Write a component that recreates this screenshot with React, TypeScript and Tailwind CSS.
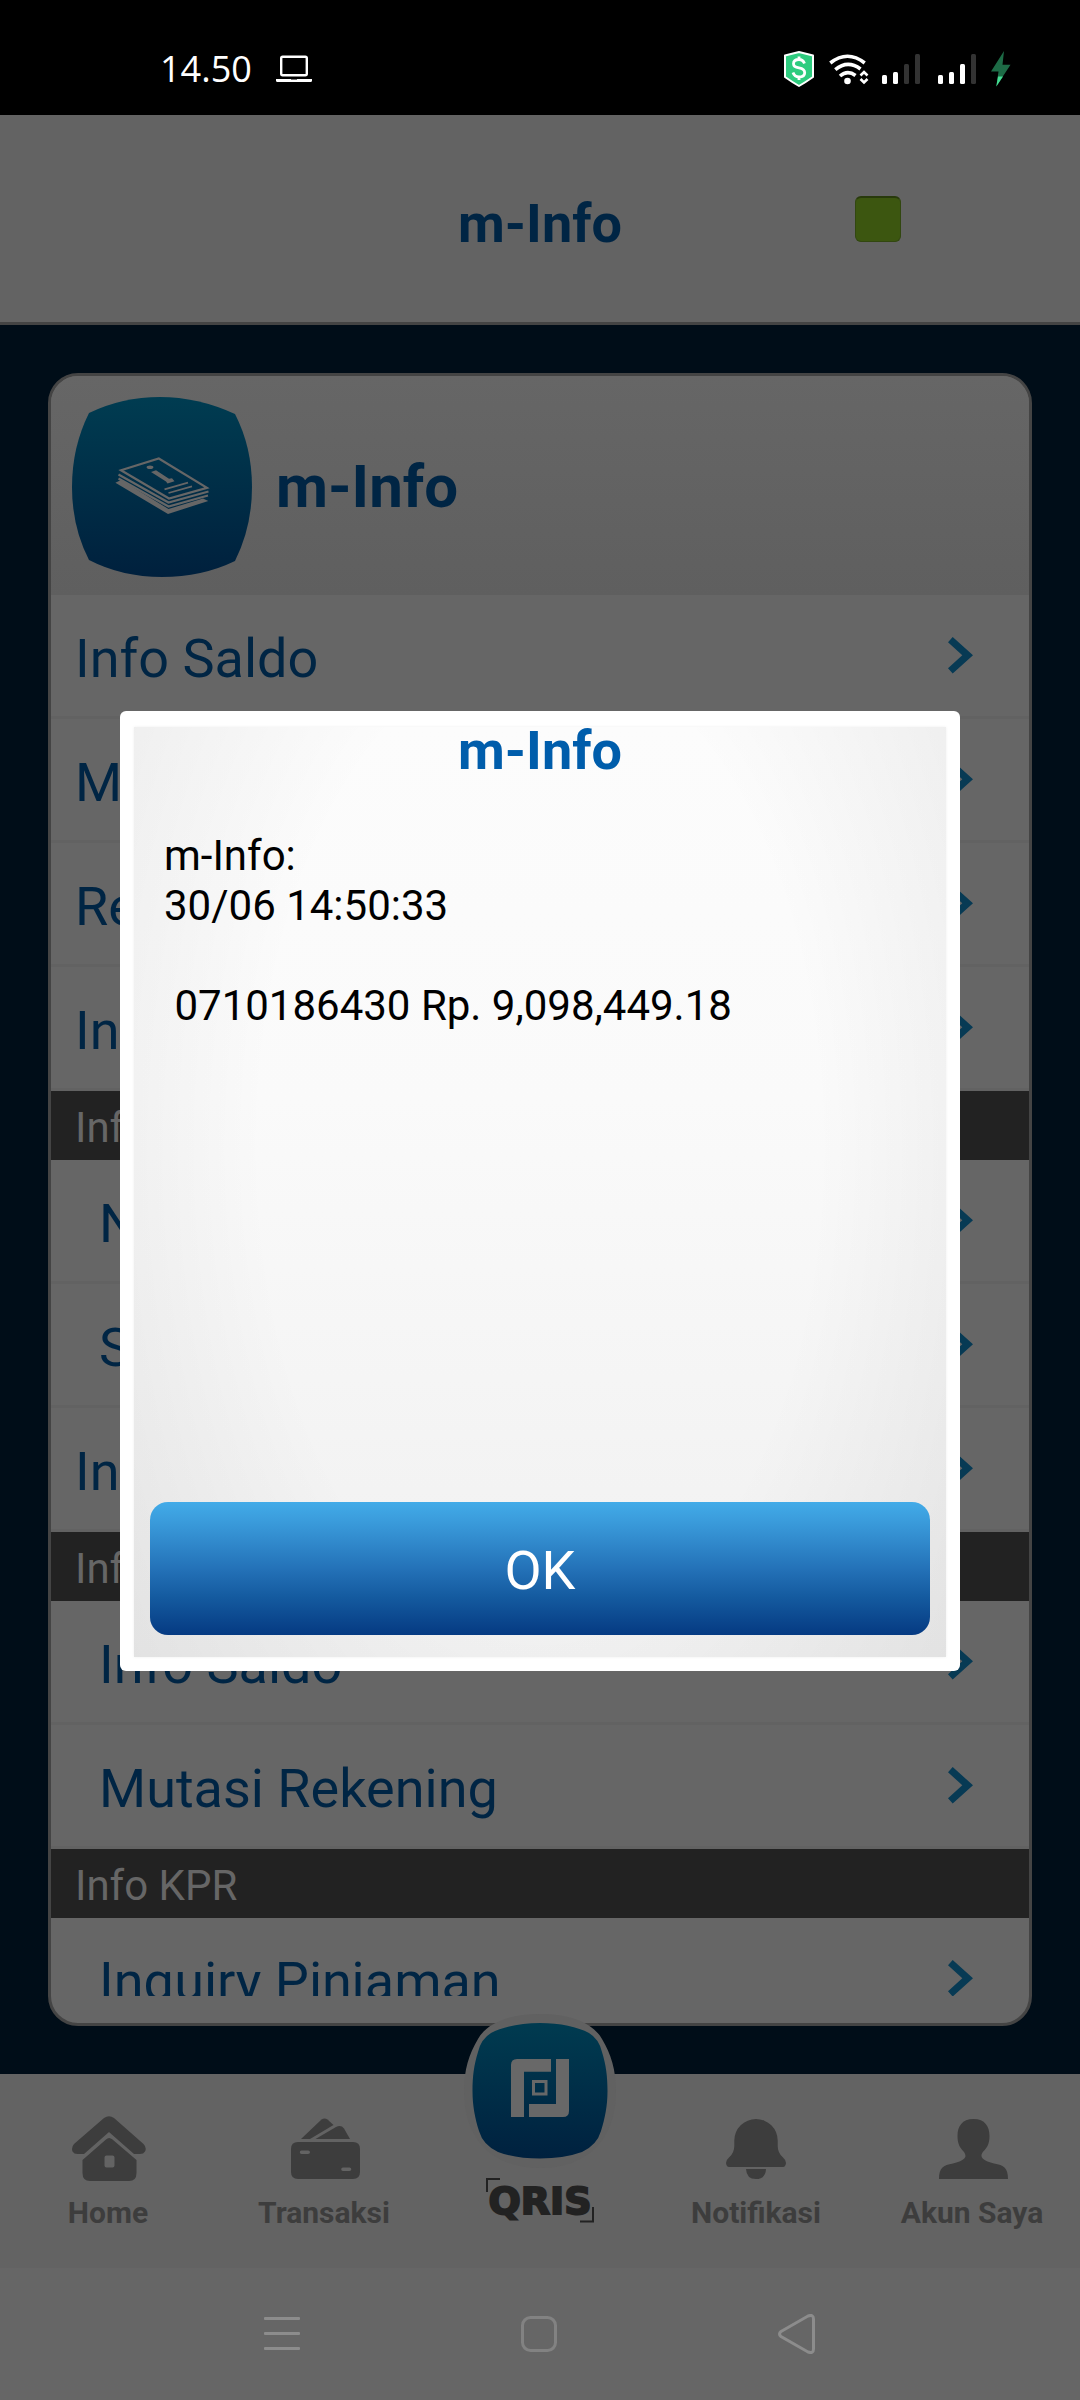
import React from "react";

type Row =
  | { kind: "item"; label: string; indent?: boolean }
  | { kind: "section"; label: string };

const rows: Row[] = [
  { kind: "item", label: "Info Saldo" },
  { kind: "item", label: "Mutasi Rekening" },
  { kind: "item", label: "Rekening Deposito" },
  { kind: "item", label: "Info Reward" },
  { kind: "section", label: "Info Reksadana" },
  { kind: "item", label: "NAB", indent: true },
  { kind: "item", label: "Saldo", indent: true },
  { kind: "item", label: "Info Kurs" },
  { kind: "section", label: "Info RDN" },
  { kind: "item", label: "Info Saldo", indent: true },
  { kind: "item", label: "Mutasi Rekening", indent: true },
  { kind: "section", label: "Info KPR" },
  { kind: "item", label: "Inquiry Pinjaman", indent: true },
];

function Signal({ level }: { level: number }) {
  const tops = [21, 18, 10, 0];
  return (
    <svg width="38" height="30" viewBox="0 0 38 30" aria-hidden="true">
      {tops.map((top, i) => (
        <rect
          key={top}
          x={i * 11}
          y={top}
          width="5"
          height={30 - top}
          rx="1.5"
          fill={i < level ? "#ffffff" : "#333333"}
        />
      ))}
    </svg>
  );
}

function StatusBar() {
  return (
    <div className="flex h-[115px] shrink-0 items-center justify-between bg-black pl-40 pr-[69px] pt-[23px] text-white">
      <div className="flex items-center gap-6">
        <span className="font-['Open_Sans',sans-serif] text-[36px] leading-none">14.50</span>
        <svg width="36" height="28" viewBox="0 0 36 28" fill="none" aria-hidden="true">
          <rect x="5.2" y="1.7" width="25.6" height="18.6" rx="1.5" stroke="#fff" strokeWidth="2.4" />
          <path d="M0 24h36v1.500q0 1.500-1.500 1.500h-33q-1.500 0-1.500-1.500z" fill="#fff" />
          <path d="M15 24h6v1h-6z" fill="#777" />
        </svg>
      </div>
      <div className="flex items-center">
        <svg className="mr-[15px]" width="30" height="36" viewBox="0 0 30 36" fill="none" aria-hidden="true">
          <path d="M15 1 29 4.500V26Q22 31 15 35Q8 31 1 26V4.500Z" fill="#2ecc7f" stroke="#fff" strokeWidth="2" strokeLinejoin="round" />
          <path d="M20.500 12.500Q19 8.500 15 8.500Q9.500 8.500 9.500 12.700Q9.500 16 15 16.800Q20.700 17.800 20.700 21.800Q20.700 26 15 26Q10.500 26 9 21.500M15 5.500v3M15 26v3" stroke="#fff" strokeWidth="2.800" />
        </svg>
        <svg className="mr-[13px]" width="40" height="31" viewBox="0 0 40 31" fill="none" aria-hidden="true">
          <g stroke="#fff" strokeWidth="3.600">
            <path d="M1.300 9Q18.500-4.500 35.700 9" />
            <path d="M6.300 15.700Q18.500 5.500 31.500 15" />
            <path d="M11 22Q18.500 15.500 26.500 21.500" />
          </g>
          <circle cx="18.500" cy="27" r="3.300" fill="#fff" />
          <path d="M31.500 21.500 35 18 38.500 21.500M31.500 25 35 28.500 38.500 25" stroke="#fff" strokeWidth="2.600" />
        </svg>
        <div className="flex items-center gap-[18px]">
          <Signal level={2} />
          <Signal level={3} />
        </div>
        <svg className="ml-[15px]" width="20" height="36" viewBox="0 0 20 36" aria-hidden="true">
          <path d="M13 0 0 20.500H7.500L5.300 35.500 19.500 13.800H11.500Z" fill="#1d6b46" />
          <path d="M7 25.500H12L5.300 35.500Z" fill="#43dd92" />
        </svg>
      </div>
    </div>
  );
}

function InfoBadge() {
  return (
    <svg width="180" height="180" viewBox="0 0 180 180" fill="none" aria-hidden="true">
      <defs>
        <linearGradient id="badge" x1="0" y1="0" x2="0" y2="1">
          <stop offset="0" stopColor="#003c51" />
          <stop offset="1" stopColor="#00203d" />
        </linearGradient>
      </defs>
      <path d="M17 16Q50 0 88 0T163 17Q180 50 180 90T163 164Q130 180 90 180T17 163Q0 130 0 90T17 16Z" fill="url(#badge)" />
      <g stroke="#666" strokeWidth="2.200">
        <path d="M49 73.300 86.800 61.500 135 90.800 97 101.500Z" />
        <path d="M46.500 77.500 96.500 105.500 136.500 94.500" />
        <path d="M46.500 81.500 96.500 109.500 136 98.500" />
        <path d="M92.500 92.300 116 85.700M96.500 96 120 89.300" strokeWidth="1.800" />
      </g>
      <path d="M43.400 85.700 49 83 96.500 112 131 101.500 136.300 104 96 117Z" fill="#666" />
      <ellipse cx="78" cy="70.300" rx="3.400" ry="1.800" fill="#666" />
      <path d="M79 75 84 73.300 97 81.800 100 81.300 102.500 84.300 95.500 86.500 94 84.500Z" fill="#666" />
    </svg>
  );
}

function Chevron() {
  return (
    <svg className="shrink-0" width="25" height="37" viewBox="0 0 25 37" aria-hidden="true">
      <path d="M4.700 0 25 18.300 4.700 36.500 0 31.300 14.300 18.300 0 5.200Z" fill="#073a54" />
    </svg>
  );
}

function MenuCard() {
  return (
    <section className="flex min-h-0 flex-1 flex-col overflow-hidden rounded-[30px] border-[3px] border-[#444] bg-[#666] pb-[27px]">
      <div className="flex h-[219px] shrink-0 items-center gap-6 bg-linear-to-b from-[#666] to-[#5f5f5f] pl-[21px] pt-[3px]">
        <InfoBadge />
        <h2 className="text-[60px] font-bold leading-none text-[#002544]">m-Info</h2>
      </div>
      <ul className="min-h-0 flex-1 overflow-y-auto [scrollbar-width:none]">
        {rows.map((row, i) =>
          row.kind === "section" ? (
            <li key={i} className="flex h-[69px] items-center bg-[#222] pl-6 pt-[5px] text-[42px] leading-none text-[#666]">
              {row.label}
            </li>
          ) : (
            <li key={i}>
              <a
                href="#"
                className={`flex h-[124px] items-center justify-between border-b-[3px] border-[#626262] pr-14 text-[54px] leading-none text-[#002544] ${
                  row.indent ? "pl-12" : "pl-6"
                }`}
              >
                <span className="pt-1.5">{row.label}</span>
                <Chevron />
              </a>
            </li>
          ),
        )}
      </ul>
    </section>
  );
}

function HomeIcon() {
  return (
    <svg width="76" height="65" viewBox="-2 0 76 65" fill="#3d3d3d" aria-hidden="true">
      <path d="M32 2Q37 -1.500 42 2L71.500 28Q75 31.500 73 35.500Q71.500 38 68 38H62L37 16 12 38H5.500Q2 38 .5 35.500Q-1 31.500 2 28Z" />
      <path fillRule="evenodd" d="M34 23.500Q37 20.500 40.500 23.500L64.500 44V57Q64.500 65 57 65H18Q10.500 65 10.500 57V44ZM34.500 39.500Q32.500 39.500 32.500 41.500V49.500Q32.500 51.500 34.500 51.500H40.500Q42.500 51.500 42.500 49.500V41.500Q42.500 39.500 40.500 39.500Z" />
    </svg>
  );
}

function CardsIcon() {
  return (
    <svg width="71" height="64" viewBox="-2 0 71 64" fill="#3d3d3d" aria-hidden="true">
      <path d="M10 22 30.500 2.500Q33.500 .5 36.500 2.500L42.500 8 19 22Z" />
      <path d="M24.500 22 45 10Q50 7.500 53 11.500L59 22Z" />
      <path fillRule="evenodd" d="M7 25H62Q69 25 69 32V55Q69 62 62 62H7Q0 62 0 55V32Q0 25 7 25ZM10.500 33.500Q8.800 33.500 8.800 35.200Q8.800 37 10.500 37H17Q19 37 19 35.200Q19 33.500 17 33.500ZM52 50.500Q50.200 50.500 50.200 52.200Q50.200 54 52 54H58.500Q60.300 54 60.300 52.200Q60.300 50.500 58.500 50.500Z" />
    </svg>
  );
}

function BellIcon() {
  return (
    <svg width="60" height="62" viewBox="0 0 60 62" fill="#3d3d3d" aria-hidden="true">
      <path d="M8.300 21.500A21.700 21.500 0 0 1 51.700 21.500V27Q51.700 34 57 38.500Q60 41 60 44Q59.500 48 57 48H3Q.5 48 0 44Q0 41 3 38.500Q8.300 34 8.300 27Z" />
      <path d="M20 50H40Q39.500 60 30 60T20 50Z" />
    </svg>
  );
}

function PersonIcon() {
  return (
    <svg width="71" height="62" viewBox="-2 0 71 62" fill="#3d3d3d" aria-hidden="true">
      <path d="M34.500 0C46 0 50.500 7.500 50.500 17C50.500 31 42.500 31 42.500 37C42.500 40 48 43 55 44.500C65 46 69 49 69 60H0C0 49 4 46 14 44.500C21 43 26.500 40 26.500 37C26.500 31 18.500 31 18.500 17C18.500 7.500 23 0 34.500 0Z" />
    </svg>
  );
}

function QrisButton() {
  return (
    <svg width="154" height="154" viewBox="0 0 154 154" fill="none" aria-hidden="true">
      <defs>
        <linearGradient id="scan" x1="0" y1="0" x2="0" y2="1">
          <stop offset="0" stopColor="#003b50" />
          <stop offset="1" stopColor="#00213f" />
        </linearGradient>
      </defs>
      <path d="M77 0C108 0 130 9 139 25C148 40 153 56 153 77C153 125 125 154 77 154S1 125 1 77C1 56 6 40 15 25C24 9 46 0 77 0Z" fill="#616161" />
      <path d="M77 9C97 9 115 13 126 19Q136 25 139 38C143 51 144.500 62 144.500 77S142 104 138 117Q134 131 119 138Q101 144.500 77 144.500T35 138Q20 131 16 117C12 104 9.500 92 9.500 77S11 51 15 38Q18 25 28 19C39 13 57 9 77 9Z" fill="url(#scan)" />
      <path d="M48 103V51Q48 45 54 45H88V57.700H61V103ZM93 45H106V97Q106 103 100 103H66V90H93Z" fill="#686868" />
      <rect x="70.500" y="67.500" width="12.500" height="12.500" stroke="#686868" strokeWidth="3" />
    </svg>
  );
}

function QrisMark() {
  return (
    <svg width="108" height="45" viewBox="0 0 108 45" role="img" aria-label="QRIS">
      <path d="M1 14V1H14M94 43.500H107V29" fill="none" stroke="#222" strokeWidth="2" />
      <text
        x="54"
        y="36"
        textAnchor="middle"
        fill="#222"
        stroke="#222"
        strokeWidth="2"
        className="font-['DejaVu_Sans',sans-serif] text-[38px] font-bold"
      >
        QRIS
      </text>
    </svg>
  );
}

function Tab({ label, icon }: { label: string; icon: React.ReactNode }) {
  return (
    <a href="#" className="flex flex-1 flex-col items-center text-[#3d3d3d]">
      <span className="flex h-[107px] items-end">{icon}</span>
      <span className="mt-[15px] whitespace-nowrap text-[30px] font-bold leading-[34px]">{label}</span>
    </a>
  );
}

function TabBar() {
  return (
    <nav className="relative flex h-[194px] shrink-0 bg-[#636363]">
      <Tab label="Home" icon={<HomeIcon />} />
      <Tab label="Transaksi" icon={<CardsIcon />} />
      <a href="#" className="flex flex-1 flex-col items-center">
        <span className="absolute bottom-[100px]">
          <QrisButton />
        </span>
        <span className="mt-[104px]">
          <QrisMark />
        </span>
      </a>
      <Tab label="Notifikasi" icon={<BellIcon />} />
      <Tab label="Akun Saya" icon={<PersonIcon />} />
    </nav>
  );
}

function InfoDialog() {
  return (
    <div
      role="dialog"
      aria-labelledby="dialog-title"
      className="flex min-h-[960px] w-full flex-col rounded-md bg-white px-[14px] pb-[14px] pt-4"
    >
      <div className="flex flex-1 flex-col bg-[radial-gradient(ellipse_62%_95%_at_50%_45%,transparent_55%,rgba(0,0,0,0.06)_100%),linear-gradient(#fcfcfc_0%,#fafafa_40%,#f0f0f0_100%)] px-4 pb-[22px] shadow-[0_0_3px_#f0f0f0]">
        <h2 id="dialog-title" className="text-center text-[54px] font-bold leading-[48px] text-[#005dab]">
          m-Info
        </h2>
        <div className="mt-14 flex-1 whitespace-pre-wrap pl-[14px] text-[42px] leading-[50px] text-black">
          {"m-Info:\n30/06 14:50:33\n\n 0710186430 Rp. 9,098,449.18"}
        </div>
        <button
          type="button"
          className="h-[133px] rounded-[18px] bg-[linear-gradient(#42abe8_0%,#3a9bdb_15%,#2472b8_50%,#145a9f_72%,#053a82_100%)] pt-1 text-[54px] leading-none text-white"
        >
          OK
        </button>
      </div>
    </div>
  );
}

function SystemNav() {
  return (
    <div className="flex h-[132px] shrink-0 items-center justify-center gap-[221px] bg-[#666]">
      <button type="button" aria-label="Recent apps">
        <svg width="36" height="34" viewBox="0 0 36 34" fill="#8c8c8c" aria-hidden="true">
          <rect y="0" width="36" height="3" rx="1" />
          <rect y="15" width="36" height="3" rx="1" />
          <rect y="30" width="36" height="3" rx="1" />
        </svg>
      </button>
      <button type="button" aria-label="Home">
        <svg width="36" height="36" viewBox="0 0 36 36" fill="none" aria-hidden="true">
          <rect x="1.500" y="1.500" width="33" height="33" rx="8" stroke="#828282" strokeWidth="3" />
        </svg>
      </button>
      <button type="button" aria-label="Back">
        <svg width="38" height="40" viewBox="0 0 38 40" fill="none" aria-hidden="true">
          <path d="M3 17.500 30 2Q35.500 0 35.500 5V35Q35.500 40 30 38L3 22.500Q0 20 3 17.500Z" stroke="#8c8c8c" strokeWidth="3" />
        </svg>
      </button>
    </div>
  );
}

export default function App() {
  return (
    <div className="flex h-screen flex-col bg-[#000d18] font-[Roboto,sans-serif]">
      <StatusBar />
      <div className="relative flex min-h-0 flex-1 flex-col">
        <header className="relative flex h-[210px] shrink-0 items-center justify-center border-b-[3px] border-[#444] bg-[#636363] pt-2.5">
          <h1 className="text-[54px] font-bold leading-none text-[#002544]">m-Info</h1>
          <span
            role="img"
            aria-label="Online"
            className="absolute right-[179px] top-[81px] size-[46px] rounded-md border border-t-2 border-[#324710] border-t-[#283a0c] bg-[#3c5610]"
          />
        </header>
        <main className="flex min-h-0 flex-1 flex-col p-12">
          <MenuCard />
        </main>
        <TabBar />
        <div className="absolute inset-0 flex items-center justify-center px-[120px] pb-px">
          <InfoDialog />
        </div>
      </div>
      <SystemNav />
    </div>
  );
}
